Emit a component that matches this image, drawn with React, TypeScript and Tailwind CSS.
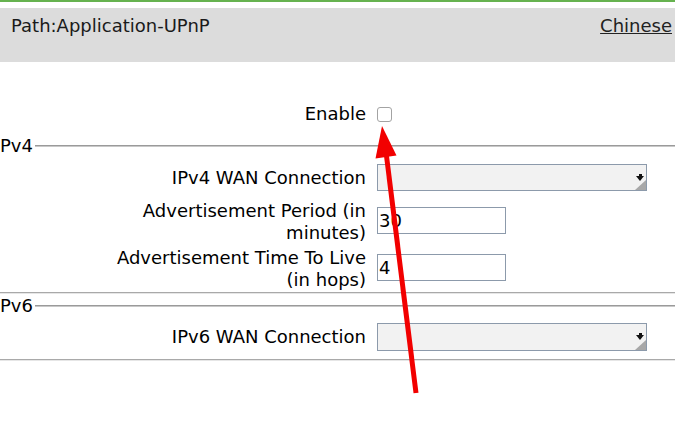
import React from 'react';

const font = "font-['DejaVu_Sans','Liberation_Sans',sans-serif]";

const SelectBox = ({ h = 27 }: { h?: number }) => (
  <div
    className={`relative w-[270px] ${h === 28 ? 'h-[28px]' : 'h-[27px]'} bg-[#f2f2f2] border border-[#8c9aab]`}
  >
    <svg className="absolute inset-0" width="268" height={h - 2} viewBox={`0 0 268 ${h - 2}`}>
      <polygon points={`268,${h - 12} 268,${h - 2} 257,${h - 2}`} fill="#a8a8a8" />
      <rect x="261" y="9" width="3" height="2" fill="#111" />
      <polygon points="258,11 266,11 262,16" fill="#111" />
    </svg>
  </div>
);

const TextBox = ({ value }: { value: string }) => (
  <div className="mt-[7px] w-[129px] h-[27px] border border-[#8c9aab] bg-white flex items-center pl-[1px] leading-[22px]">
    {value}
  </div>
);

const Row = ({
  label,
  children,
  className = '',
}: {
  label: React.ReactNode;
  children: React.ReactNode;
  className?: string;
}) => (
  <div className={`flex ml-[106px] ${className}`}>
    <div className="w-[260px] text-right leading-[22px]">{label}</div>
    <div className="ml-[11px]">{children}</div>
  </div>
);

const Legend = ({ text, className = '' }: { text: string; className?: string }) => (
  <div className={`flex items-center h-[22px] leading-[22px] ${className}`}>
    <span>{text}</span>
    <div className="flex-1 ml-[2px] flex flex-col">
      <div className="h-px bg-[#9a9a9a]" />
      <div className="h-px bg-[#c8c8c8]" />
    </div>
  </div>
);

const Rule = ({ className = '' }: { className?: string }) => (
  <div className={`flex flex-col ${className}`}>
    <div className="h-px bg-[#a9a9a9]" />
    <div className="h-px bg-[#e6e6e6]" />
  </div>
);

export default function App() {
  return (
    <div className={`relative w-[675px] h-[427px] overflow-hidden bg-white text-black text-[18px] ${font}`}>
      <div className="h-[2px] bg-[#66b24f]" />

      <div className="mt-[6px] h-[54px] bg-[#dcdcdc] flex justify-between pl-[11px] pr-[3px] pt-[7px] leading-[22px] text-[#1a1a1a]">
        <span>Path:Application-UPnP</span>
        <a href="#" className="underline text-[#222] h-[22px]">Chinese</a>
      </div>

      <div className="mt-[41px] h-[22px] flex items-center ml-[106px]">
        <div className="w-[260px] text-right leading-[22px]">Enable</div>
        <div className="ml-[11px] w-[15px] h-[15px] rounded-[3px] border border-[#a3a3a3] bg-white" />
      </div>

      <Legend text="Pv4" className="mt-[10px]" />

      <Row label="IPv4 WAN Connection" className="mt-[7px] h-[27px] items-center">
        <SelectBox />
      </Row>

      <Row label="Advertisement Period (in minutes)" className="mt-[9px] h-[44px]">
        <TextBox value="30" />
      </Row>

      <Row label="Advertisement Time To Live (in hops)" className="mt-[3px] h-[44px]">
        <TextBox value="4" />
      </Row>

      <Rule className="mt-[1px]" />

      <Legend text="Pv6" className="mt-[1px]" />

      <Row label="IPv6 WAN Connection" className="mt-[6px] h-[28px] items-center">
        <SelectBox h={28} />
      </Row>

      <Rule className="mt-[8px]" />

      {/* red annotation arrow */}
      <svg className="absolute inset-0 pointer-events-none" width="675" height="427" viewBox="0 0 675 427">
        <line x1="416" y1="393" x2="386" y2="152" stroke="#f20000" strokeWidth="5" />
        <polygon points="382,126 375.5,158.5 396.5,155.5" fill="#f20000" />
      </svg>
    </div>
  );
}
